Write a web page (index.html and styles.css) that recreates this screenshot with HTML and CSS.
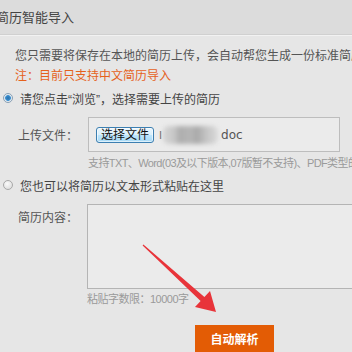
FILE: index.html
```html
<!DOCTYPE html>
<html>
<head>
<meta charset="utf-8">
<link rel="stylesheet" href="styles.css">
</head>
<body>
<div class="page">
  <div class="header"><span class="title">简历智能导入</span></div>
  <div class="main">
    <p class="intro">您只需要将保存在本地的简历上传，会自动帮您生成一份标准简历</p>
    <p class="note">注：目前只支持中文简历导入</p>
    <div class="option">
      <span class="radio checked"></span>
      <span>请您点击“浏览”，选择需要上传的简历</span>
    </div>
    <div class="field upload">
      <span class="label">上传文件：</span>
      <div class="filebox">
        <span class="filebtn">选择文件</span>
        <span class="fname-i">I</span>
        <span class="blurred"></span>
        <span class="ext">doc</span>
      </div>
    </div>
    <p class="hint">支持TXT、Word(03及以下版本,07版暂不支持)、PDF类型的</p>
    <div class="option second">
      <span class="radio"></span>
      <span>您也可以将简历以文本形式粘贴在这里</span>
    </div>
    <div class="field paste">
      <span class="label">简历内容：</span>
      <div class="textarea"></div>
    </div>
    <p class="hint limit">粘贴字数限：10000字</p>
    <div class="actions">
      <span class="submit">自动解析</span>
    </div>
  </div>
  <svg class="arrow" width="352" height="352" viewBox="0 0 352 352">
    <polygon points="142.6,245.5 143.4,244.5 204.4,297.0 210,291 216,312 195,307 200.6,300.9" fill="#e8343a"/>
  </svg>
</div>
</body>
</html>
```
FILE: styles.css
```css
html, body {
  margin: 0;
  padding: 0;
  background: #e6e6e6;
}
body {
  font-family: "Liberation Sans", "Noto Sans CJK SC", sans-serif;
  font-size: 12px;
  color: #555;
  overflow: hidden;
  width: 352px;
  height: 352px;
}
.page {
  position: relative;
  width: 352px;
  height: 352px;
  overflow: hidden;
}
.header {
  height: 35px;
  background: #dcdcdc;
  border-bottom: 1px solid #f2f2f2;
  box-shadow: inset 0 -1px 0 #d0d0d0;
  display: flex;
  align-items: center;
}
.title {
  margin-left: -4px;
  margin-top: -3px;
  font-size: 13px;
  color: #444;
}
.main {
  padding-top: 10px;
}
p {
  margin: 0;
}
.intro, .note {
  padding-left: 15px;
  line-height: 20px;
  white-space: nowrap;
}
.note {
  color: #e5621c;
}
.option {
  display: flex;
  align-items: center;
  height: 20px;
  margin-top: 2px;
  padding-left: 3px;
  color: #444;
  white-space: nowrap;
}
.option.second {
  margin-top: 4px;
}
.radio {
  width: 8px;
  height: 8px;
  border-radius: 50%;
  border: 1px solid #a8a8a8;
  background: radial-gradient(circle at 40% 35%, #fafafa, #d6d6d6);
  margin-right: 7px;
  flex: none;
}
.radio.checked {
  border-color: #8aa0b4;
  background: radial-gradient(circle, #2a6fa8 0, #3a8fd0 2.5px, #dde6ee 3.2px, #f4f4f4 5px);
}
.field {
  display: flex;
  padding-left: 18px;
}
.label {
  width: 70px;
  flex: none;
  color: #555;
  white-space: nowrap;
}
.upload {
  margin-top: 9px;
  align-items: center;
}
.filebox {
  width: 243px;
  height: 33px;
  border: 1px solid #bdbdbd;
  background: #ebebeb;
  display: flex;
  align-items: center;
  padding-left: 7px;
  box-sizing: content-box;
}
.filebtn {
  width: 56px;
  height: 14px;
  border: 1px solid #3c7fb1;
  border-radius: 3px;
  background: linear-gradient(#eaf6fd, #d9f0fc 50%, #bee6fd 51%, #a7d9f5);
  color: #111;
  font-size: 12px;
  line-height: 14px;
  text-align: center;
  flex: none;
  box-shadow: inset 0 0 0 1px rgba(255,255,255,0.6);
}
.fname-i {
  margin-left: 5px;
  color: #666;
  font-size: 11px;
}
.blurred {
  width: 55px;
  height: 18px;
  margin-left: 1px;
  background: linear-gradient(90deg, #d4d4d4 0, #c8c8c8 20%, #aeaeae 30%, #b6b6b6 50%, #a9a9a9 62%, #c4c4c4 78%, #dadada 100%);
  filter: blur(2px);
  border-radius: 6px;
}
.ext {
  margin-left: 3px;
  font-family: "DejaVu Sans", sans-serif;
  font-size: 12px;
  color: #555;
}
.hint {
  padding-left: 88px;
  margin-top: 3px;
  font-size: 11px;
  letter-spacing: -0.6px;
  line-height: 16px;
  color: #9a9a9a;
  white-space: nowrap;
}
.paste {
  margin-top: 9px;
  align-items: flex-start;
}
.paste .label {
  width: 69px;
  line-height: 20px;
  padding-top: 4px;
}
.textarea {
  width: 280px;
  height: 83px;
  border: 1px solid #b4b4b4;
  background: #ebebeb;
  flex: none;
}
.limit {
  padding-left: 87px;
  margin-top: 2px;
  letter-spacing: -0.5px;
}
.actions {
  margin-top: 18px;
  padding-left: 195px;
}
.submit {
  display: block;
  width: 79px;
  height: 30px;
  background: #e35c05;
  color: #fff;
  font-weight: bold;
  text-align: center;
  line-height: 30px;
  font-size: 12px;
}
.arrow {
  position: absolute;
  left: 0;
  top: 0;
  pointer-events: none;
}
```
